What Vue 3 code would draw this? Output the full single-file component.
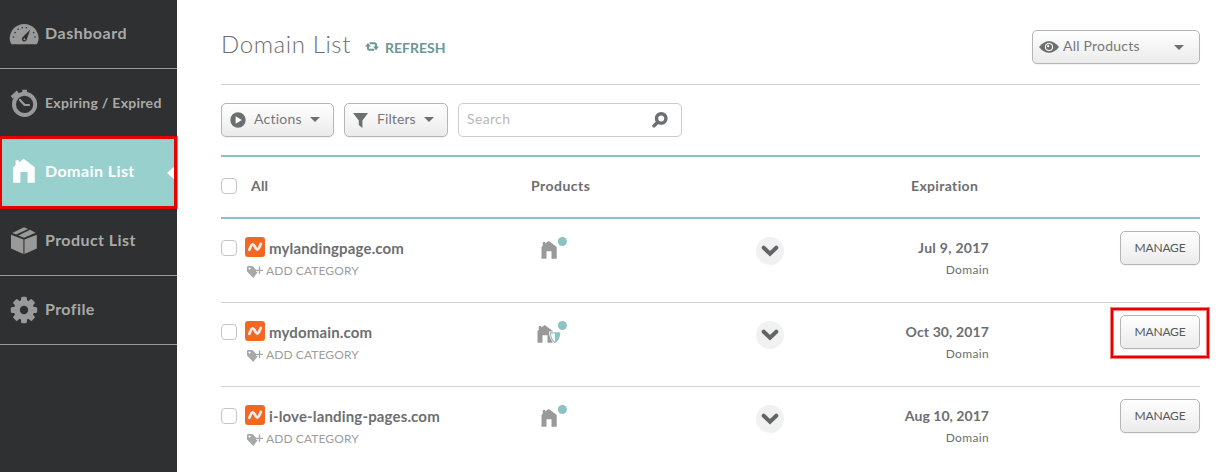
<script setup>
const nav = [
  { label: 'Dashboard', icon: 'gauge', spacing: 's5' },
  { label: 'Expiring / Expired', icon: 'clock', spacing: 's3', small: true },
  { label: 'Domain List', icon: 'house', spacing: 's4', active: true },
  { label: 'Product List', icon: 'box', spacing: 's4' },
  { label: 'Profile', icon: 'gear', spacing: 's4' },
]
const rows = [
  { name: 'mylandingpage.com', date: 'Jul 9, 2017', spacing: 's3' },
  { name: 'mydomain.com', date: 'Oct 30, 2017', spacing: 's1', shield: true, marked: true },
  { name: 'i-love-landing-pages.com', date: 'Aug 10, 2017', spacing: 's0' },
]
const teeth = [0, 45, 90, 135, 180, 225, 270, 315]
</script>

<template>
  <div class="page">
    <nav class="sidebar">
      <a v-for="n in nav" :key="n.label" class="item" :class="{ active: n.active }">
        <svg v-if="n.icon === 'gauge'" class="ico" viewBox="0 0 30 30">
          <path d="M2.5 25.2C1.3 23.4 .7 21.6 .7 19.5C.7 11.6 7 5 15.2 5S29.6 11.6 29.6 19.5C29.6 21.6 29 23.4 27.8 25.2Z" fill="#999" />
          <g fill="#2f3031">
            <circle cx="4.4" cy="18" r=".8" /><circle cx="6" cy="13.6" r=".8" /><circle cx="9.2" cy="10.3" r=".8" />
            <circle cx="13.2" cy="8.8" r=".8" /><circle cx="17.4" cy="8.8" r=".8" /><circle cx="24.6" cy="13.6" r=".8" /><circle cx="26" cy="18" r=".8" />
            <path d="M21.2 10.4L17.8 20.6A2.5 2.5 0 1 1 13.8 18.1Z" />
          </g>
          <circle cx="15.4" cy="20.2" r="1" fill="#999" />
        </svg>
        <svg v-else-if="n.icon === 'clock'" class="ico" viewBox="0 0 30 30">
          <circle cx="15.6" cy="16.4" r="10.6" fill="none" stroke="#999" stroke-width="4" />
          <path d="M13.3 1.8h4.6v3.6h-4.6zM1.800 8L7.800 2.400l2.200 3.200-6.200 5.200z" fill="#999" />
          <path d="M11 11.900L15.600 17H20" fill="none" stroke="#999" stroke-width="2.2" stroke-linecap="round" stroke-linejoin="round" />
        </svg>
        <svg v-else-if="n.icon === 'house'" class="ico" viewBox="0 0 30 30">
          <path d="M4 10.400L6.600 8.200V3.300H9.800V5.500L14.700 1.700L25.700 10.200V25.800H18.600V15H11.400V25.800H4z" fill="#fff" />
        </svg>
        <svg v-else-if="n.icon === 'box'" class="ico" viewBox="0 0 30 30">
          <path d="M2 8.8L14.4 13.4V28L2 22.6zM27.8 8.8L15.5 13.4V28L27.8 22.6zM15 1.3L19 2.9 7.2 8.6 3.3 7.1zM21.1 3.8L26.6 6.7 15 11.700 9.400 9.400z" fill="#999" />
        </svg>
        <svg v-else class="ico" viewBox="0 0 30 30">
          <g fill="#999">
            <rect v-for="t in teeth" :key="t" x="12" y="1.800" width="6" height="7" rx="1.600" :transform="`rotate(${t} 15 15)`" />
          </g>
          <circle cx="15" cy="15" r="7.200" fill="none" stroke="#999" stroke-width="6" />
        </svg>
        <span class="label" :class="[n.spacing, { small: n.small }]">{{ n.label }}</span>
      </a>
    </nav>

    <main class="main">
      <header class="head">
        <h1>Domain List</h1>
        <a class="refresh">
          <svg width="14" height="11" viewBox="0 0 14 11">
            <path d="M3 4.500V7.200Q3 8.700 4.500 8.700H9.300M11 6.500V3.800Q11 2.300 9.500 2.300H4.700" fill="none" stroke="#6b9796" stroke-width="2" />
            <path d="M0 5.600L3 2 6 5.600zM8 5.600L11 9.200 14 5.600z" fill="#6b9796" />
          </svg>
          <span>REFRESH</span>
        </a>
        <button class="btn all">
          <svg width="20" height="12" viewBox="0 0 20 12">
            <path d="M0 6Q4.500 .2 10 .2T20 6Q15.500 11.800 10 11.800T0 6z" fill="#6d6e70" />
            <circle cx="10" cy="6" r="4.100" fill="#fafafa" /><circle cx="10" cy="6" r="3" fill="#6d6e70" /><circle cx="9.200" cy="5.200" r="1.100" fill="#fafafa" />
          </svg>
          <span>All Products</span>
          <i class="caret"></i>
        </button>
      </header>

      <div class="tools">
        <button class="btn actions">
          <svg width="16" height="16" viewBox="0 0 16 16"><circle cx="8" cy="8" r="7.700" fill="#6d6e70" /><path d="M5.600 4.200V11.800L11.800 8z" fill="#fff" /></svg>
          <span>Actions</span><i class="caret"></i>
        </button>
        <button class="btn filters">
          <svg width="15" height="15" viewBox="0 0 15 15"><path d="M0 0H15L9.400 7.600V15L5.800 12V7.600z" fill="#6d6e70" /></svg>
          <span>Filters</span><i class="caret"></i>
        </button>
        <div class="search">
          <span>Search</span>
          <svg width="16" height="16" viewBox="0 0 16 16"><circle cx="9.200" cy="6.400" r="4.700" fill="none" stroke="#6d6e70" stroke-width="3.400" /><path d="M5.800 10L2 13.900" stroke="#6d6e70" stroke-width="3.400" stroke-linecap="round" /></svg>
        </div>
      </div>

      <div class="thead">
        <i class="check"></i>
        <b class="c-all">All</b>
        <b class="c-prod">Products</b>
        <b class="c-exp">Expiration</b>
      </div>

      <div v-for="r in rows" :key="r.name" class="row">
        <i class="check"></i>
        <div class="domain">
          <div class="name">
            <svg width="20" height="20" viewBox="0 0 20 20">
              <rect width="20" height="20" rx="3" fill="#f26722" />
              <path d="M4.300 12.900C5.300 11 6 7.700 7.700 7.300S10.700 12.800 12.300 12.700S14.700 9 15.800 7" fill="none" stroke="#f2eeee" stroke-width="2.700" stroke-linecap="round" stroke-linejoin="round" />
            </svg>
            <span>{{ r.name }}</span>
          </div>
          <div class="cat">
            <svg width="16" height="12" viewBox="0 0 16 12">
              <path fill-rule="evenodd" d="M0 1Q0 0 1 0H5.500L11 5.800 6.300 12 0 5.500zM2.600 1.500A1 1 0 1 0 2.610 1.500z" fill="#a7a8aa" />
              <path d="M12.500 .5V8M9 4.300H16" stroke="#fff" stroke-width="3" />
              <path d="M12.500 .5V8M9 4.300H16" stroke="#a7a8aa" stroke-width="1.300" />
            </svg>
            <span>ADD CATEGORY</span>
          </div>
        </div>
        <div class="products">
          <svg width="34" height="24" viewBox="0 0 34 24">
            <path :transform="r.shield ? 'translate(-4 0)' : ''" d="M4.500 10L5.800 8.800V5H8.300V6.600L11.800 3.900L19.700 9.900V21.800H14.500V14.200H9.500V21.800H4.500z" fill="#999" />
            <g v-if="r.shield">
              <path d="M12 10.600H24Q24 18.800 18 23Q12 18.800 12 10.600z" fill="#fff" />
              <path d="M13.500 11.900H22.700Q22.600 18.200 18 21.600Q13.600 18.200 13.500 11.900z" fill="#fff" stroke="#8cc2c1" stroke-width="1.100" />
              <path d="M18 11.900V21.600Q22.600 18.200 22.700 11.900z" fill="#8cc2c1" />
            </g>
            <circle cx="25.400" cy="4.500" r="4.500" fill="#8cc2c1" />
          </svg>
        </div>
        <div class="more">
          <svg width="18" height="12" viewBox="0 0 18 12"><path d="M2.700 2.700L9 8.800L15.300 2.700" fill="none" stroke="#636466" stroke-width="4" stroke-linecap="round" /></svg>
        </div>
        <div class="exp">
          <b :class="r.spacing">{{ r.date }}</b>
          <span>Domain</span>
        </div>
        <button class="btn manage">MANAGE<i v-if="r.marked" class="mark"></i></button>
      </div>
    </main>
  </div>
</template>

<style>
body { margin: 0; background: #fff; overflow: hidden; }
</style>

<style scoped>
.page { display: flex; width: 1222px; height: 472px; overflow: hidden; font-family: Lato, "Open Sans", sans-serif; color: #6d6e70; }
svg { display: block; flex: none; }
.s0 { letter-spacing: .04px; }
.s1 { letter-spacing: .12px; }
.s3 { letter-spacing: .28px; }
.s4 { letter-spacing: .42px; }
.s5 { letter-spacing: .52px; }

.sidebar { width: 177px; flex: none; background: #2f3031; }
.item { position: relative; display: flex; align-items: center; box-sizing: border-box; width: 177px; height: 69px; padding-left: 9px; border-bottom: 1px solid #999; color: #a9aaa8; }
.ico { width: 30px; height: 30px; }
.label { margin-left: 6px; padding-bottom: 2px; font-size: 16px; line-height: 20px; font-weight: 700; white-space: nowrap; }
.label.small { padding-bottom: 0; font-size: 14px; }
.active { background: #97d0cd; color: #fff; }
.active::before { content: ""; position: absolute; right: 2px; top: 28px; border: 7px solid transparent; border-left-width: 0; border-right: 8px solid #fff; }
.active::after { content: ""; position: absolute; left: -1px; top: -2px; width: 172px; height: 67px; border: 3px solid #e60000; box-shadow: 1px 0 0 rgba(230, 0, 0, .5); }

.main { width: 979px; margin-left: 44px; }
.head { display: flex; align-items: center; box-sizing: border-box; height: 85px; border-bottom: 1px solid #d1d1d1; }
h1 { margin: 3px 0 0; font-size: 24px; line-height: 30px; font-weight: 300; letter-spacing: .6px; white-space: nowrap; }
.refresh { display: flex; align-items: center; margin: 11px 0 0 14px; font-size: 14px; line-height: 18px; font-weight: 700; color: #6b9796; }
.refresh svg { margin-bottom: 2px; }
.refresh span { margin-left: 6px; }
.btn { display: flex; align-items: center; box-sizing: border-box; height: 34px; padding: 0; border: 1px solid #b5b5b5; border-radius: 5px; background: linear-gradient(#fff, #ebebeb); box-shadow: 0 1px 1px rgba(0, 0, 0, .06); font: 400 14px/18px Lato, "Open Sans", sans-serif; color: #77787a; }
.caret { margin-left: auto; border: 5px solid transparent; border-bottom-width: 0; border-top-color: #6d6e70; }
.all { width: 168px; margin: 9px 0 0 auto; padding: 0 15px 0 6px; }
.all span { margin: 0 0 0 4px; padding-bottom: 2px; letter-spacing: .22px; }
.all svg, .all .caret { margin-top: 1px; }
.tools { display: flex; gap: 10px; padding-top: 18px; height: 52px; box-sizing: border-box; }
.actions { width: 113px; padding: 0 13px 0 8px; }
.actions span { margin-left: 8px; padding-bottom: 2px; letter-spacing: .25px; }
.filters { width: 104px; padding: 0 13px 0 8px; }
.filters span { margin-left: 9px; padding-bottom: 2px; letter-spacing: .1px; }
.actions .caret, .filters .caret { margin-bottom: 1px; }
.search { display: flex; align-items: center; justify-content: space-between; box-sizing: border-box; width: 224px; height: 34px; padding: 0 13px 1px 8px; border: 1px solid #ccc; border-radius: 5px; font-size: 14px; line-height: 18px; letter-spacing: .35px; color: #b9b9b9; }
.search span { padding-bottom: 2px; }

.thead { display: flex; align-items: center; box-sizing: border-box; height: 64px; margin-top: 18px; padding-bottom: 2px; border: solid #8cc2bf; border-width: 2px 0; font-size: 14px; line-height: 18px; }
.check { box-sizing: border-box; width: 16px; height: 16px; flex: none; border: 1px solid #c4c4c4; border-radius: 4px; background: #fff; }
.c-all { width: 280px; margin-left: 14px; letter-spacing: .2px; }
.c-prod { width: 380px; letter-spacing: .48px; }
.c-exp { letter-spacing: .35px; }

.row { display: flex; align-items: flex-start; box-sizing: border-box; height: 84px; padding-top: 12px; border-bottom: 1px solid #d1d1d1; }
.row:last-child { border-bottom-color: transparent; }
.row .check { margin-top: 9px; }
.domain { width: 286px; margin: 6px 0 0 8px; }
.name { display: flex; align-items: center; height: 20px; font-size: 15px; line-height: 20px; font-weight: 700; letter-spacing: .15px; }
.name span { margin-left: 4px; padding-top: 1px; white-space: nowrap; }
.cat { display: flex; align-items: center; margin: 6px 0 0 2px; font-size: 12px; line-height: 16px; color: #9c9d9f; letter-spacing: .1px; }
.cat svg { margin-top: 1px; }
.cat span { margin-left: 3px; }
.products { width: 219px; margin: 6px 0 0 6px; }
.more { display: flex; align-items: center; justify-content: center; width: 28px; height: 28px; margin-top: 6px; border-radius: 50%; background: #f1f1f1; }
.exp { display: flex; flex-direction: column; align-items: flex-end; width: 205px; margin-top: 8px; }
.exp b { font-size: 14px; line-height: 18px; }
.exp span { margin-top: 4px; font-size: 12px; line-height: 18px; letter-spacing: .35px; }
.manage { position: relative; justify-content: center; width: 80px; margin-left: auto; padding-bottom: 1px; font-size: 12px; letter-spacing: -.2px; color: #58595b; }
.mark { position: absolute; left: -10px; top: -8px; width: 94px; height: 46px; border: 2px solid #e60000; box-shadow: 0 0 0 1px rgba(230, 0, 0, .5), inset 0 0 0 1px rgba(230, 0, 0, .5); }
</style>
